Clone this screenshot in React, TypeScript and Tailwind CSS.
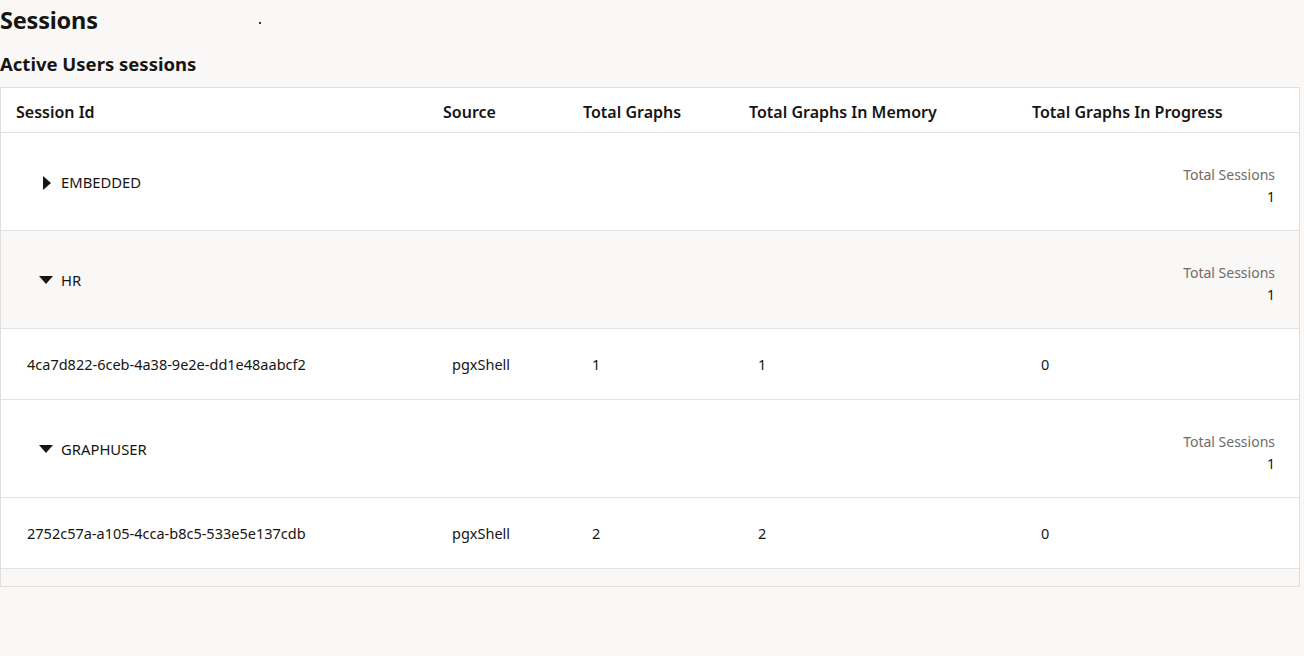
import React from "react";

const cols = "grid grid-cols-[427px_140px_166px_283px_1fr]";

function GroupRow({ name, open, shaded }: { name: string; open: boolean; shaded?: boolean }) {
  return (
    <div className={`flex h-[98px] items-center justify-between border-b border-[#e4e3e1] pl-[38px] pr-[24px] ${shaded ? "bg-[#f9f8f6]" : "bg-white"}`}>
      <div className="flex items-center pt-[2px]">
        {open ? (
          <svg width="14" height="9" viewBox="0 0 14 9" className="mr-[9px]">
            <polygon points="0,0 14,0 7,8" fill="#161513" />
          </svg>
        ) : (
          <svg width="9" height="14" viewBox="0 0 9 14" className="ml-[4px] mr-[10px]">
            <polygon points="0,0 8,7 0,14" fill="#161513" />
          </svg>
        )}
        <span className="-ml-[1px] text-[14.8px] text-[#161513]">{name}</span>
      </div>
      <div className="flex flex-col items-end pt-[8px] text-[14px] leading-[22px]">
        <span className="text-[#6f6c69]">Total Sessions</span>
        <span className="text-[#161513]">1</span>
      </div>
    </div>
  );
}

function DataRow({ id, source, total, mem, prog }: { id: string; source: string; total: string; mem: string; prog: string }) {
  return (
    <div className={`${cols} h-[71px] items-center border-b border-[#e4e3e1] bg-white pt-[2px] text-[14.5px] text-[#161513]`}>
      <div className="pl-[26px]">{id}</div>
      <div className="pl-[24px]">{source}</div>
      <div className="pl-[24px]">{total}</div>
      <div className="pl-[24px]">{mem}</div>
      <div className="pl-[24px]">{prog}</div>
    </div>
  );
}

export default function App() {
  return (
    <div
      className="min-h-[656px] w-full bg-[#f9f8f6] text-[#161513]"
      style={{ fontFamily: '"Noto Sans", "Open Sans", sans-serif' }}
    >
      <div className="relative flex h-[43px] items-center pb-[1px]">
        <h1 className="text-[23.5px] font-bold leading-none tracking-[-0.2px]">Sessions</h1>
        <div className="absolute left-[259px] top-[22px] h-[1.5px] w-[1.5px] bg-[#333]" />
      </div>
      <h2 className="h-[44px] pt-[9px] text-[18.5px] font-bold leading-[24px]">Active Users sessions</h2>
      <div className="w-[1300px] border border-[#e0dfdd] bg-white">
        <div className={`${cols} h-[45px] items-center border-b border-[#e4e3e1] pt-[3px] text-[16px] font-semibold`}>
          <div className="pl-[15px]">Session Id</div>
          <div className="pl-[15px]">Source</div>
          <div className="pl-[15px]">Total Graphs</div>
          <div className="pl-[15px]">Total Graphs In Memory</div>
          <div className="pl-[15px]">Total Graphs In Progress</div>
        </div>
        <GroupRow name="EMBEDDED" open={false} />
        <GroupRow name="HR" open shaded />
        <DataRow id="4ca7d822-6ceb-4a38-9e2e-dd1e48aabcf2" source="pgxShell" total="1" mem="1" prog="0" />
        <GroupRow name="GRAPHUSER" open />
        <DataRow id="2752c57a-a105-4cca-b8c5-533e5e137cdb" source="pgxShell" total="2" mem="2" prog="0" />
        <div className="h-[17px] bg-[#f9f8f6]" />
      </div>
    </div>
  );
}
